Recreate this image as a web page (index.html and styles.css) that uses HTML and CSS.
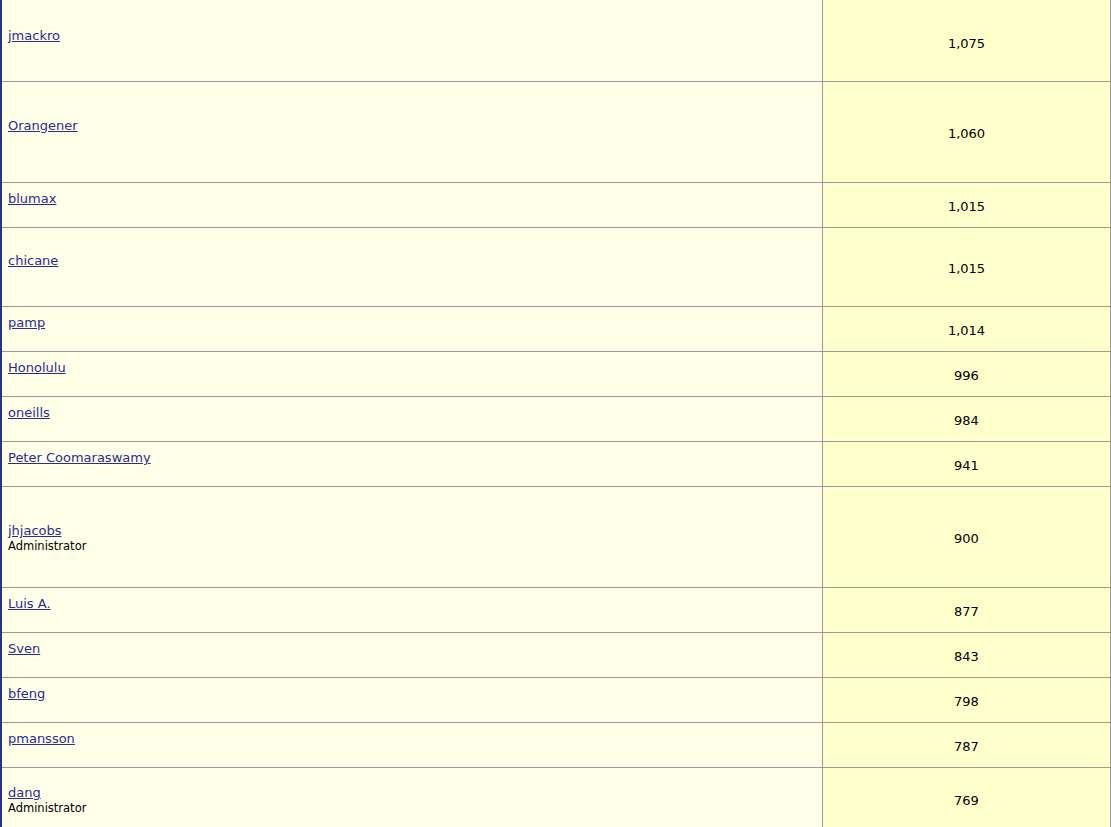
FILE: index.html
```html
<!DOCTYPE html>
<html>
<head>
<meta charset="utf-8">
<title>Top posters</title>
<link rel="stylesheet" href="styles.css">
</head>
<body>
<div class="board">
  <div class="row spacer"><div class="name"></div><div class="count"></div></div>
  <div class="row h80"><div class="name"><a href="#">jmackro</a><span class="title">&nbsp;</span></div><div class="count">1,075</div></div>
  <div class="row h101"><div class="name"><a href="#">Orangener</a><span class="title">&nbsp;</span></div><div class="count">1,060</div></div>
  <div class="row h45"><div class="name"><a href="#">blumax</a><span class="title">&nbsp;</span></div><div class="count">1,015</div></div>
  <div class="row h79"><div class="name"><a href="#">chicane</a><span class="title">&nbsp;</span></div><div class="count">1,015</div></div>
  <div class="row h45"><div class="name"><a href="#">pamp</a><span class="title">&nbsp;</span></div><div class="count">1,014</div></div>
  <div class="row h45"><div class="name"><a href="#">Honolulu</a><span class="title">&nbsp;</span></div><div class="count">996</div></div>
  <div class="row h45"><div class="name"><a href="#">oneills</a><span class="title">&nbsp;</span></div><div class="count">984</div></div>
  <div class="row h45"><div class="name"><a href="#">Peter Coomaraswamy</a><span class="title">&nbsp;</span></div><div class="count">941</div></div>
  <div class="row h101"><div class="name"><a href="#">jhjacobs</a><span class="title">Administrator</span></div><div class="count">900</div></div>
  <div class="row h45"><div class="name"><a href="#">Luis A.</a><span class="title">&nbsp;</span></div><div class="count">877</div></div>
  <div class="row h45"><div class="name"><a href="#">Sven</a><span class="title">&nbsp;</span></div><div class="count">843</div></div>
  <div class="row h45"><div class="name"><a href="#">bfeng</a><span class="title">&nbsp;</span></div><div class="count">798</div></div>
  <div class="row h45"><div class="name"><a href="#">pmansson</a><span class="title">&nbsp;</span></div><div class="count">787</div></div>
  <div class="row h63"><div class="name"><a href="#">dang</a><span class="title">Administrator</span></div><div class="count">769</div></div>
</div>
</body>
</html>
```

FILE: styles.css
```css
html, body {
  margin: 0;
  padding: 0;
  background: #ffffe8;
  overflow: hidden;
}

.board {
  width: 1111px;
  box-sizing: border-box;
  border-left: 2px solid #25328a;
  border-right: 1px solid #9a9a9a;
  font-family: "DejaVu Sans", Verdana, sans-serif;
  color: #000;
}

.row {
  display: grid;
  grid-template-columns: 821px 1fr;
  box-sizing: border-box;
  border-top: 1px solid #9a9a9a;
}

.row.spacer {
  border-top: none;
  height: 1px;
}

.h45 { height: 45px; }
.h63 { height: 63px; }
.h79 { height: 79px; }
.h80 { height: 80px; }
.h101 { height: 101px; }

.name {
  background: #ffffe8;
  border-right: 1px solid #9a9a9a;
  padding-left: 6px;
  display: flex;
  flex-direction: column;
  justify-content: center;
  align-items: flex-start;
}

.name a {
  font-size: 13px;
  line-height: 15px;
  color: #2b2b94;
  text-decoration: underline;
}

.title {
  font-size: 11.5px;
  line-height: 13px;
  margin-top: 2px;
  margin-bottom: -2px;
}

.count {
  background: #ffffcc;
  display: flex;
  align-items: center;
  justify-content: center;
  font-size: 13px;
  padding-top: 3px;
}
```
